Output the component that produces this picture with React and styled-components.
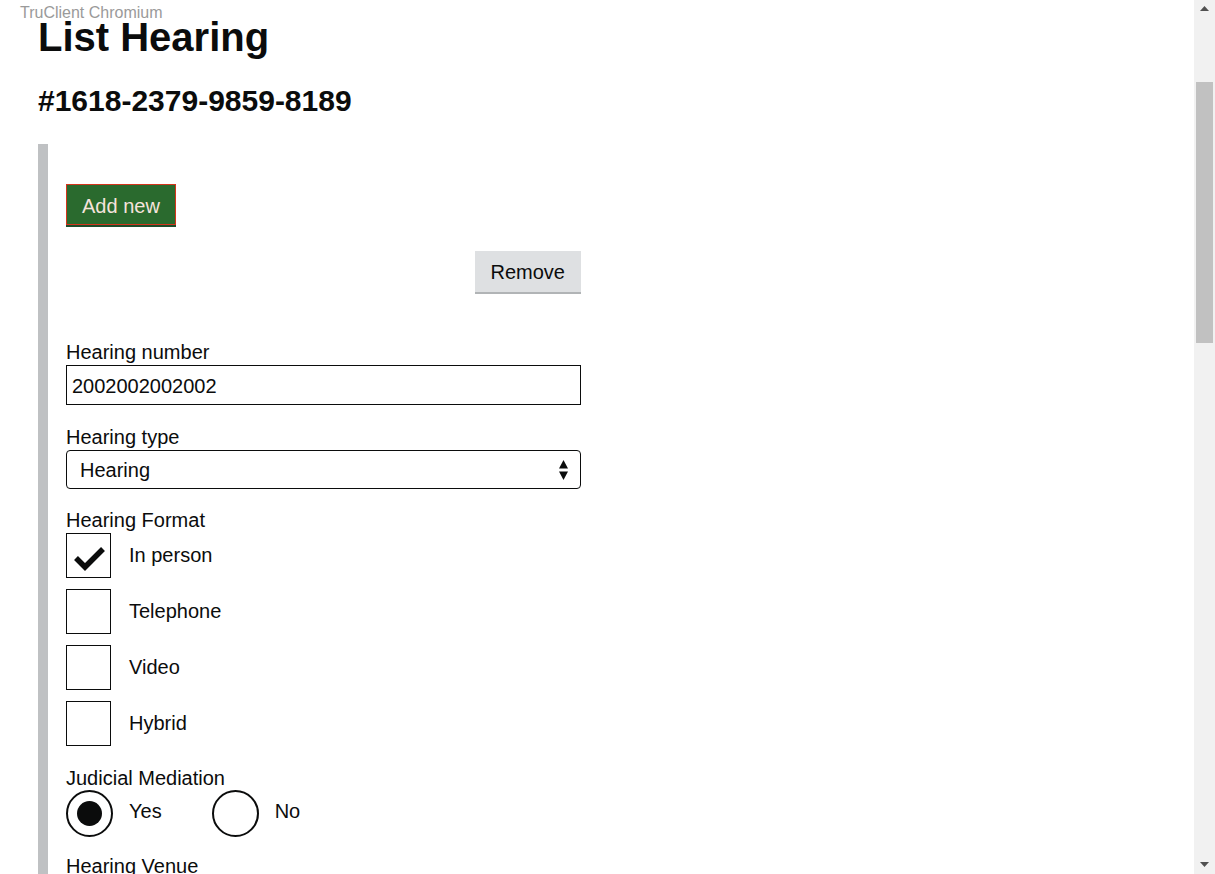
import React from "react";
import styled, { createGlobalStyle } from "styled-components";

const GlobalStyle = createGlobalStyle`
  html, body {
    margin: 0;
    padding: 0;
    background: #fff;
  }
  body {
    font-family: "Liberation Sans", Arial, sans-serif;
    color: #0b0c0c;
  }
  * {
    box-sizing: border-box;
  }
`;

const Screen = styled.div`
  position: relative;
  display: flex;
  height: 874px;
  overflow: hidden;
`;

// test-runner label drawn over the page
const Watermark = styled.div`
  position: absolute;
  top: 4px;
  left: 20px;
  font-size: 16px;
  color: #9a9a9a;
  pointer-events: none;
`;

const Page = styled.main`
  flex: 1;
  padding: 14px 0 0 38px;
  overflow: hidden;
`;

const Title = styled.h1`
  margin: 0;
  font-size: 40px;
  line-height: 46px;
  font-weight: 700;
`;

const CaseNumber = styled.h2`
  margin: 23px 0 0;
  font-size: 30px;
  line-height: 35px;
  font-weight: 700;
`;

const Collection = styled.section`
  margin-top: 26px;
  border-left: 10px solid #bfc1c3;
  padding: 40px 0 0 18px;
  min-height: 800px;
`;

const Column = styled.div`
  width: 515px;
  display: flex;
  flex-direction: column;
`;

const Button = styled.button`
  font-family: inherit;
  font-size: 20px;
  line-height: 25px;
  cursor: pointer;
  border: ${(p) => (p.$primary ? "1px solid #d4351c" : "none")};
  background: ${(p) => (p.$primary ? "#2a6a2e" : "#dee0e2")};
  color: ${(p) => (p.$primary ? "#f6e3dc" : "#0b0c0c")};
  box-shadow: 0 2px 0 ${(p) => (p.$primary ? "#1e4a2a" : "#b1b4b6")};
  padding: ${(p) => (p.$primary ? "9px 15px 5px" : "9px 16px 7px")};
  align-self: ${(p) => (p.$right ? "flex-end" : "flex-start")};
  margin-top: ${(p) => p.$top || 0}px;
`;

const Field = styled.div`
  margin-top: ${(p) => p.$top}px;
`;

const Label = styled.label`
  display: block;
  font-size: 20px;
  line-height: 23px;
  padding-top: 3px;
  margin-bottom: 1px;
`;

const TextInput = styled.input`
  display: block;
  width: 100%;
  height: 40px;
  border: 1px solid #0b0c0c;
  padding: 2px 5px 0;
  font-family: inherit;
  font-size: 20px;
  color: #0b0c0c;
  outline: none;
`;

const SelectWrap = styled.div`
  position: relative;
  width: 100%;
`;

const Select = styled.select`
  appearance: none;
  -webkit-appearance: none;
  display: block;
  width: 100%;
  height: 39px;
  border: 1px solid #0b0c0c;
  border-radius: 4px;
  background: #fff;
  padding: 0 30px 0 13px;
  font-family: inherit;
  font-size: 20px;
  color: #0b0c0c;
`;

const SelectArrows = styled.svg`
  position: absolute;
  right: 13px;
  top: 10px;
  pointer-events: none;
`;

const CheckList = styled.div`
  display: flex;
  flex-direction: column;
  gap: 11px;
`;

const OptionRow = styled.div`
  display: flex;
  align-items: center;
  font-size: 20px;
  margin-right: ${(p) => p.$spacing || 0}px;
`;

const Box = styled.span`
  width: 45px;
  height: 45px;
  border: 1px solid #0b0c0c;
  display: flex;
  align-items: center;
  justify-content: center;
  flex-shrink: 0;
`;

const OptionText = styled.span`
  margin-left: ${(p) => p.$indent}px;
  margin-bottom: ${(p) => p.$lift || 0}px;
`;

const RadioRow = styled.div`
  display: flex;
  margin-top: -1px;
`;

const Circle = styled.span`
  width: 47px;
  height: 47px;
  border: 2px solid #0b0c0c;
  border-radius: 50%;
  display: flex;
  align-items: center;
  justify-content: center;
  flex-shrink: 0;

  &::after {
    content: "";
    width: 25px;
    height: 25px;
    border-radius: 50%;
    background: ${(p) => (p.$checked ? "#0b0c0c" : "transparent")};
  }
`;

const Scrollbar = styled.div`
  width: 21px;
  flex-shrink: 0;
  background: #f1f1f1;
  display: flex;
  flex-direction: column;
  align-items: center;
  padding: 6px 2px 7px;
`;

const Thumb = styled.div`
  width: 17px;
  height: 261px;
  margin-top: 71px;
  background: #c1c1c1;
`;

const Spacer = styled.div`
  flex: 1;
`;

const Arrow = ({ down }) => (
  <svg width="9" height="5" viewBox="0 0 9 5">
    <polygon
      points={down ? "0,0 9,0 4.5,5" : "0,5 9,5 4.5,0"}
      fill="#505050"
    />
  </svg>
);

const Checkbox = ({ label, checked }) => (
  <OptionRow>
    <Box>
      {checked && (
        <svg width="43" height="43" viewBox="0 0 43 43">
          <polyline
            points="9,24 18,33 36,15"
            fill="none"
            stroke="#0b0c0c"
            strokeWidth="5.5"
          />
        </svg>
      )}
    </Box>
    <OptionText $indent={18}>{label}</OptionText>
  </OptionRow>
);

const Radio = ({ label, checked, spacing }) => (
  <OptionRow $spacing={spacing}>
    <Circle $checked={checked} />
    <OptionText $indent={16} $lift={4}>
      {label}
    </OptionText>
  </OptionRow>
);

const formats = [
  { label: "In person", checked: true },
  { label: "Telephone" },
  { label: "Video" },
  { label: "Hybrid" },
];

export default function App() {
  return (
    <>
      <GlobalStyle />
      <Screen>
        <Page>
          <Title>List Hearing</Title>
          <CaseNumber>#1618-2379-9859-8189</CaseNumber>

          <Collection>
            <Column>
              <Button $primary>Add new</Button>
              <Button $right $top={26}>
                Remove
              </Button>

              <Field $top={46}>
                <Label>Hearing number</Label>
                <TextInput defaultValue="2002002002002" />
              </Field>

              <Field $top={18}>
                <Label>Hearing type</Label>
                <SelectWrap>
                  <Select defaultValue="hearing">
                    <option value="hearing">Hearing</option>
                  </Select>
                  <SelectArrows width="9" height="20" viewBox="0 0 9 20">
                    <polygon points="0,8.5 9,8.5 4.5,0" fill="#0b0c0c" />
                    <polygon points="0,11.5 9,11.5 4.5,20" fill="#0b0c0c" />
                  </SelectArrows>
                </SelectWrap>
              </Field>

              <Field $top={17}>
                <Label>Hearing Format</Label>
                <CheckList>
                  {formats.map((f) => (
                    <Checkbox key={f.label} {...f} />
                  ))}
                </CheckList>
              </Field>

              <Field $top={18}>
                <Label>Judicial Mediation</Label>
                <RadioRow>
                  <Radio label="Yes" checked spacing={50} />
                  <Radio label="No" />
                </RadioRow>
              </Field>

              <Field $top={15}>
                <Label>Hearing Venue</Label>
                <SelectWrap>
                  <Select defaultValue="">
                    <option value="">Select venue</option>
                  </Select>
                </SelectWrap>
              </Field>
            </Column>
          </Collection>
        </Page>

        <Scrollbar>
          <Arrow />
          <Thumb />
          <Spacer />
          <Arrow down />
        </Scrollbar>

        <Watermark>TruClient Chromium</Watermark>
      </Screen>
    </>
  );
}
